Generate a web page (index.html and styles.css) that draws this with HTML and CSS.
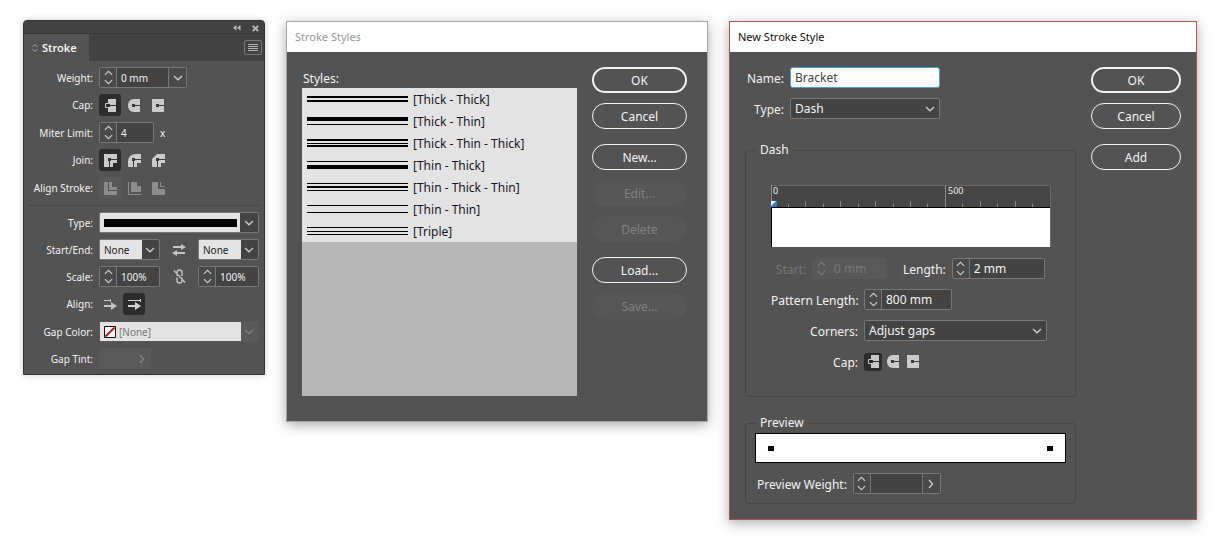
FILE: index.html
```html
<!DOCTYPE html>
<html lang="en">
<head>
<meta charset="utf-8">
<title>Stroke</title>
<link rel="stylesheet" href="styles.css">
</head>
<body>
<svg class="defs" aria-hidden="true">
  <symbol id="up" viewBox="0 0 10 6"><path d="M1 5 5 1.200 9 5" fill="none" stroke="currentColor" stroke-width="1.300"/></symbol>
  <symbol id="down" viewBox="0 0 10 6"><path d="M1 1 5 4.800 9 1" fill="none" stroke="currentColor" stroke-width="1.300"/></symbol>
  <symbol id="right" viewBox="0 0 6 10"><path d="M1 1 4.600 5 1 9" fill="none" stroke="currentColor" stroke-width="1.300"/></symbol>
  <symbol id="cap-butt" viewBox="0 0 12 13"><path d="M4 0h8v13H4z" fill="#cacaca"/><path d="M1.500 4.500h3v4h-3z" fill="#2d2d2d" stroke="#cacaca"/><path d="M4 5h2v1h6v1H6v1H4z" fill="#2d2d2d"/></symbol>
  <symbol id="cap-round" viewBox="0 0 12 13"><path d="M12 0H6C2 0 0 3 0 6.500S2 13 6 13h6z" fill="#cacaca"/><path d="M4 5h3v1h5v1H7v1H4z" fill="#3b3b3b"/></symbol>
  <symbol id="cap-square" viewBox="0 0 12 13"><path d="M0 0h12v13H0z" fill="#cacaca"/><path d="M4 5h3v1h5v1H7v1H4z" fill="#3b3b3b"/></symbol>
  <symbol id="join-miter" viewBox="0 0 13 13"><path d="M0 0h13v9H9v4H0z" fill="#cacaca"/><path d="M4 4h3v1h6v1H7v1H6v6H5V7H4z" fill="#333"/></symbol>
  <symbol id="join-round" viewBox="0 0 13 13"><path d="M13 0H8C3 0 0 3 0 8v5h9V9h4z" fill="#cacaca"/><path d="M4 4h3v1h6v1H7v1H6v6H5V7H4z" fill="#3b3b3b"/></symbol>
  <symbol id="join-bevel" viewBox="0 0 13 13"><path d="M13 0H5L0 5v8h9V9h4z" fill="#cacaca"/><path d="M4 4h3v1h6v1H7v1H6v6H5V7H4z" fill="#3b3b3b"/></symbol>
  <symbol id="align-center" viewBox="0 0 13 13"><path d="M0 0h8v5h5v8H0z" fill="#8c8c8c"/><path d="M4 0h1v8h8v1H4z" fill="#505050"/></symbol>
  <symbol id="align-in" viewBox="0 0 13 13"><path d="M3 0h6v4h4v6H3z" fill="#8c8c8c"/><path d="M0 0h1v12h12v1H0z" fill="#8c8c8c"/></symbol>
  <symbol id="align-out" viewBox="0 0 13 13"><path d="M0 0h6v7h7v6H0z" fill="#8c8c8c"/><path d="M8 0h1v4h4v1H8z" fill="#8c8c8c"/></symbol>
</svg>

<main class="desk">
  <section class="panel" aria-label="Stroke panel">
    <div class="grip">
      <button class="bare" aria-label="Collapse"><svg width="8" height="6" viewBox="0 0 8 6"><path d="M3.500 0v5.500L0 2.800zM7.500 0v5.500L4 2.800z" fill="#b5b5b5"/></svg></button>
      <button class="bare" aria-label="Close"><svg width="7" height="7" viewBox="0 0 7 7"><path d="m.8.8 5.400 5.400m0-5.400L.8 6.200" stroke="#bdbdbd" stroke-width="1.800"/></svg></button>
    </div>
    <div class="tabs">
      <h2 class="tab"><svg width="6" height="10" viewBox="0 0 6 10"><path d="M.6 4 3 1.300 5.400 4M.6 6 3 8.700 5.400 6" fill="none" stroke="#aaa"/></svg>Stroke</h2>
      <button class="menu" aria-label="Panel menu"><svg width="10" height="8" viewBox="0 0 10 8"><path d="M0 .5h10M0 2.500h10M0 4.500h10M0 6.500h10" stroke="#b0b0b0"/></svg></button>
    </div>
    <div class="rows">
      <div class="row">
        <label for="weight">Weight:</label>
        <div class="num w88">
          <span class="step"><button aria-label="More"><svg><use href="#up"/></svg></button><button aria-label="Less"><svg><use href="#down"/></svg></button></span>
          <input id="weight" value="0 mm"><button class="drop" aria-label="Choose weight"><svg class="chev"><use href="#down"/></svg></button>
        </div>
      </div>
      <div class="row">
        <span class="lab">Cap:</span>
        <div class="tools">
          <button class="tool on" aria-label="Butt cap"><svg class="cap"><use href="#cap-butt"/></svg></button>
          <button class="tool" aria-label="Round cap"><svg class="cap"><use href="#cap-round"/></svg></button>
          <button class="tool" aria-label="Projecting cap"><svg class="cap"><use href="#cap-square"/></svg></button>
        </div>
      </div>
      <div class="row">
        <label for="miter">Miter Limit:</label>
        <div class="num w55">
          <span class="step"><button aria-label="More"><svg><use href="#up"/></svg></button><button aria-label="Less"><svg><use href="#down"/></svg></button></span>
          <input id="miter" value="4">
        </div>
        <span>x</span>
      </div>
      <div class="row">
        <span class="lab">Join:</span>
        <div class="tools">
          <button class="tool on" aria-label="Miter join"><svg class="join"><use href="#join-miter"/></svg></button>
          <button class="tool" aria-label="Round join"><svg class="join"><use href="#join-round"/></svg></button>
          <button class="tool" aria-label="Bevel join"><svg class="join"><use href="#join-bevel"/></svg></button>
        </div>
      </div>
      <div class="row">
        <span class="lab">Align Stroke:</span>
        <div class="tools">
          <button class="tool dim" disabled aria-label="Align to center"><svg class="join"><use href="#align-center"/></svg></button>
          <button class="tool" disabled aria-label="Align to inside"><svg class="join"><use href="#align-in"/></svg></button>
          <button class="tool" disabled aria-label="Align to outside"><svg class="join"><use href="#align-out"/></svg></button>
        </div>
      </div>
      <hr class="rule">
      <div class="row">
        <span class="lab">Type:</span>
        <button class="line-type" aria-label="Stroke type: Solid" aria-haspopup="listbox"><span class="solid"></span><span class="arrow"><svg class="chev"><use href="#down"/></svg></span></button>
      </div>
      <div class="row">
        <label for="start">Start/End:</label>
        <div class="pair">
          <div class="pick light w60"><select id="start"><option>None</option></select><svg class="chev"><use href="#down"/></svg></div>
          <button class="bare" aria-label="Swap start and end"><svg width="14" height="12" viewBox="0 0 14 12"><path d="M1 2h8V0l5 3-5 3V4H1zM13 8H5V6L0 9l5 3v-2h8z" fill="#c4c4c4"/></svg></button>
          <div class="pick light w60"><select id="end" aria-label="End"><option>None</option></select><svg class="chev"><use href="#down"/></svg></div>
        </div>
      </div>
      <div class="row">
        <label for="scale1">Scale:</label>
        <div class="pair">
          <div class="num w60">
            <span class="step"><button aria-label="More"><svg><use href="#up"/></svg></button><button aria-label="Less"><svg><use href="#down"/></svg></button></span>
            <input id="scale1" value="100%">
          </div>
          <button class="bare" aria-label="Link scales"><svg width="13" height="15" viewBox="0 0 13 15" fill="none" stroke="#bdbdbd" stroke-width="1.500"><path d="M4 7V3.500a2.500 2.500 0 0 1 5 0V7M4 8.500v3a2.500 2.500 0 0 0 5 0v-3M1 1.500l11 12"/></svg></button>
          <div class="num w60">
            <span class="step"><button aria-label="More"><svg><use href="#up"/></svg></button><button aria-label="Less"><svg><use href="#down"/></svg></button></span>
            <input aria-label="End scale" value="100%">
          </div>
        </div>
      </div>
      <div class="row">
        <span class="lab">Align:</span>
        <div class="tools">
          <button class="tool" aria-label="Extend arrow beyond path"><svg width="13" height="11" viewBox="0 0 13 11"><path d="M0 1.500h7" stroke="#c4c4c4"/><path d="M6 0h1v3H6zM0 6h7V3l6 4-6 4V8H0z" fill="#c4c4c4"/></svg></button>
          <button class="tool on" aria-label="Place arrow at path end"><svg width="13" height="11" viewBox="0 0 13 11"><path d="M0 1.500h12" stroke="#d4d4d4"/><path d="M12 0h1v3h-1zM0 6h7V3l6 4-6 4V8H0z" fill="#d4d4d4"/></svg></button>
        </div>
      </div>
      <div class="row">
        <label for="gap">Gap Color:</label>
        <div class="pick light color">
          <svg class="swatch" viewBox="0 0 12 12"><path d="M.5.5h11v11H.5z" fill="#fff" stroke="#111"/><path d="M1.500 10.500l9-9" stroke="#b3121d" stroke-width="1.800"/></svg>
          <select id="gap" disabled><option>[None]</option></select><svg class="chev"><use href="#down"/></svg>
        </div>
      </div>
      <div class="row">
        <label for="tint">Gap Tint:</label>
        <div class="tint"><input id="tint" disabled><svg class="more"><use href="#right"/></svg></div>
      </div>
    </div>
  </section>

  <section class="dialog" aria-label="Stroke Styles">
    <h2 class="title">Stroke Styles</h2>
    <div class="body">
      <div class="styles">
        <span id="styles-label" class="caption">Styles:</span>
        <ul class="list" role="listbox" aria-labelledby="styles-label">
          <li role="option"><svg class="sample"><path d="M0 8h101v2H0zM0 12h101v2H0z"/></svg><span>[Thick - Thick]</span></li>
          <li role="option"><svg class="sample"><path d="M0 7h101v4H0zM0 14h101v1H0z"/></svg><span>[Thick - Thin]</span></li>
          <li role="option"><svg class="sample"><path d="M0 7h101v2H0zM0 11h101v1H0zM0 13h101v2H0z"/></svg><span>[Thick - Thin - Thick]</span></li>
          <li role="option"><svg class="sample"><path d="M0 7h101v1H0zM0 11h101v4H0z"/></svg><span>[Thin - Thick]</span></li>
          <li role="option"><svg class="sample"><path d="M0 7h101v1H0zM0 10h101v2H0zM0 14h101v1H0z"/></svg><span>[Thin - Thick - Thin]</span></li>
          <li role="option"><svg class="sample"><path d="M0 7h101v1H0zM0 14h101v1H0z"/></svg><span>[Thin - Thin]</span></li>
          <li role="option"><svg class="sample"><path d="M0 7h101v1H0zM0 11h101v1H0zM0 14h101v1H0z"/></svg><span>[Triple]</span></li>
        </ul>
      </div>
      <div class="actions wide">
        <div class="group"><button class="pill main">OK</button><button class="pill">Cancel</button></div>
        <div class="group"><button class="pill">New...</button><button class="pill" disabled>Edit...</button><button class="pill" disabled>Delete</button></div>
        <div class="group"><button class="pill">Load...</button><button class="pill" disabled>Save...</button></div>
      </div>
    </div>
  </section>

  <section class="dialog active" aria-label="New Stroke Style">
    <h2 class="title">New Stroke Style</h2>
    <div class="body">
      <form class="form">
        <div class="line head"><label for="name">Name:</label><input id="name" class="text" value="Bracket"></div>
        <div class="line head"><label for="type">Type:</label><div class="pick w150"><select id="type"><option>Dash</option></select><svg class="chev"><use href="#down"/></svg></div></div>
        <fieldset class="box dash">
          <legend>Dash</legend>
          <div class="inner">
            <svg class="ruler" viewBox="0 0 280 63">
              <path d="M0 0h280v22H0z" fill="#464646"/>
              <path d="M0 .5h279.500V62" fill="none" stroke="#666"/>
              <path d="M.5 0v22M174.500 0v22" stroke="#8a8a8a"/>
              <path d="M17.500 19v3M34.500 16v6M52.500 19v3M69.500 16v6M87.500 19v3M104.500 16v6M122.500 19v3M139.500 16v6M156.500 19v3M191.500 19v3M209.500 16v6M226.500 19v3M244.500 16v6M261.500 19v3" stroke="#8a8a8a"/>
              <path d="M0 22h279v40H0z" fill="#000"/><path d="M1 23h278v39H1z" fill="#fff"/>
              <path d="M0 16h6v5l-2 1H0z" fill="#2f80c8"/><path d="M0 16h5L0 21z" fill="#fff"/>
              <text x="2" y="9">0</text><text x="177" y="9">500</text>
            </svg>
            <div class="line">
              <label class="off" for="from">Start:</label>
              <div class="num off w75"><span class="step"><button type="button" disabled aria-label="More"><svg><use href="#up"/></svg></button><button type="button" disabled aria-label="Less"><svg><use href="#down"/></svg></button></span><input id="from" disabled value="0 mm"></div>
              <label class="after" for="length">Length:</label>
              <div class="num w93"><span class="step"><button type="button" aria-label="More"><svg><use href="#up"/></svg></button><button type="button" aria-label="Less"><svg><use href="#down"/></svg></button></span><input id="length" value="2 mm"></div>
            </div>
            <div class="line"><label for="pattern">Pattern Length:</label>
              <div class="num w88"><span class="step"><button type="button" aria-label="More"><svg><use href="#up"/></svg></button><button type="button" aria-label="Less"><svg><use href="#down"/></svg></button></span><input id="pattern" value="800 mm"></div>
            </div>
            <div class="line"><label for="corners">Corners:</label><div class="pick w183"><select id="corners"><option>Adjust gaps</option></select><svg class="chev"><use href="#down"/></svg></div></div>
            <div class="line"><span class="lab">Cap:</span>
              <div class="tools small">
                <button type="button" class="tool on" aria-label="Butt cap"><svg class="cap"><use href="#cap-butt"/></svg></button>
                <button type="button" class="tool" aria-label="Round cap"><svg class="cap"><use href="#cap-round"/></svg></button>
                <button type="button" class="tool" aria-label="Projecting cap"><svg class="cap"><use href="#cap-square"/></svg></button>
              </div>
            </div>
          </div>
        </fieldset>
        <fieldset class="box preview">
          <legend>Preview</legend>
          <div class="view"><i></i><i></i></div>
          <div class="line"><label for="pw">Preview Weight:</label>
            <div class="num w88"><span class="step"><button type="button" aria-label="More"><svg><use href="#up"/></svg></button><button type="button" aria-label="Less"><svg><use href="#down"/></svg></button></span><input id="pw"><button type="button" class="drop" aria-label="Choose preview weight"><svg class="more"><use href="#right"/></svg></button></div>
          </div>
        </fieldset>
      </form>
      <div class="actions">
        <div class="group"><button class="pill main">OK</button><button class="pill">Cancel</button></div>
        <div class="group"><button class="pill">Add</button></div>
      </div>
    </div>
  </section>
</main>
</body>
</html>
```

FILE: styles.css
```css
* { box-sizing: border-box; }
body { margin: 0; background: #fff; color: #f2f2f2; font: 12px/16px "Noto Sans", sans-serif; }
h2, ul, fieldset, legend { margin: 0; padding: 0; font-size: inherit; font-weight: 400; }
button, input, select { font: inherit; color: inherit; margin: 0; padding: 0; border: 0; border-radius: 0; background: none; outline: 0; }
button { display: flex; align-items: center; justify-content: center; }
select { appearance: none; width: 100%; height: 100%; opacity: 1; }
svg { display: block; flex: none; }
.defs { position: absolute; width: 0; height: 0; }

.desk { display: grid; grid-template-columns: 242fr 422fr 468fr; gap: 21px; align-items: start; padding: 21px 25px 24px 23px; }

/* Stroke panel */
.panel { background: #535353; border: 1px solid #333; border-radius: 4px 4px 0 0; font-size: 10px; box-shadow: 0 0 6px #0003; margin-top: -1px; overflow: hidden; }
.grip { height: 13px; background: #424242; border-bottom: 1px solid #383838; display: flex; justify-content: flex-end; align-items: center; gap: 11px; padding: 2px 5px 0; }
.tabs { height: 27px; background: #424242; display: flex; justify-content: space-between; align-items: center; padding-right: 2px; }
.tab { height: 27px; background: #535353; display: flex; align-items: center; gap: 4px; padding: 0 12px 0 8px; font-size: 11px; font-weight: 600; }
.menu { width: 18px; height: 15px; border: 1px solid #777; border-radius: 2px; }
.rows { display: flex; flex-direction: column; gap: 6px; padding: 6px 5px 5px 0; }
.row { display: flex; align-items: center; gap: 6px; }
.row > label, .row > .lab { width: 69px; text-align: right; white-space: nowrap; flex: none; }
.rule { margin: 0 0 0 4px; height: 1px; border: 0; background: #474747; }
.pair { flex: 1; display: flex; justify-content: space-between; align-items: center; }

/* Shared fields */
.num { display: flex; height: 21px; border: 1px solid #777; border-radius: 2px; background: #434343; }
.num input { flex: 1; min-width: 0; width: 0; padding: 0 4px; }
.step { width: 17px; flex: none; background: #4a4a4a; border-right: 1px solid #777; display: flex; flex-direction: column; justify-content: center; align-items: center; gap: 3px; }
.step svg { width: 9px; height: 6px; color: #ccc; }
.drop { width: 18px; flex: none; border-left: 1px solid #777; background: #4a4a4a; }
.chev { width: 10px; height: 6px; color: #ccc; }
.more { width: 6px; height: 10px; color: #ccc; }
.pick { position: relative; height: 21px; border: 1px solid #777; border-radius: 2px; background: #434343; }
.pick select { padding: 0 20px 0 4px; }
.pick .chev { position: absolute; right: 4px; top: 7px; }
.light select { width: calc(100% - 17px); padding: 0 4px; background: #e3e3e3; color: #222; display: block; }
.w55 { width: 55px; } .w60 { width: 61px; } .w75 { width: 75px; } .w88 { width: 88px; } .w93 { width: 93px; } .w150 { width: 150px; } .w183 { width: 183px; }

.tools { display: flex; gap: 2px; }
.tool { width: 22px; height: 22px; border-radius: 3px; }
.on { background: #2d2d2d; }
.dim { background: #595959; }
.cap { width: 12px; height: 13px; }
.join { width: 13px; height: 13px; }
.line-type { flex: 1; height: 21px; border: 1px solid #777; border-radius: 2px; background: #e3e3e3; justify-content: stretch; }
.solid { flex: 1; height: 8px; background: #000; margin: 0 3px 0 4px; }
.arrow { width: 18px; height: 19px; background: #434343; display: grid; place-items: center; }
.pick.color { flex: 1; background: #595959; border-color: #595959; }
.color select { padding-left: 19px; color: #777; }
.color .chev { color: #858585; }
.swatch { position: absolute; left: 4px; top: 4px; width: 12px; height: 12px; }
.tint { width: 52px; height: 21px; background: #595959; display: flex; align-items: center; padding-right: 6px; }
.tint input { flex: 1; min-width: 0; width: 0; }
.tint .more { color: #858585; }

/* Dialogs */
.dialog { background: #535353; border: 1px solid #a5a5a5; box-shadow: 0 3px 12px #0005; }
.active { border-color: #b25353; }
.title { height: 30px; padding: 7px 8px; background: #fff; color: #999; font-size: 11px; }
.active .title { color: #111; }
.body { display: flex; justify-content: space-between; padding: 15px 20px 25px 15px; }
.active .body { padding: 15px; }
.styles { width: 275px; padding-top: 4px; }
.caption { display: block; padding: 0 1px 1px; }
.list { list-style: none; height: 308px; background: #b8b8b8; color: #15151f; }
.list li { height: 22px; display: flex; align-items: center; gap: 5px; background: #e3e3e3; padding-left: 5px; }
.list span { padding-top: 2px; }
.sample { width: 101px; height: 22px; }
.actions { width: 90px; display: flex; flex-direction: column; gap: 15px; }
.wide { width: 95px; }
.group { display: flex; flex-direction: column; gap: 10px; }
.pill { height: 26px; padding-top: 2px; border: 1px solid #f2f2f2; border-radius: 13px; }
.main { border-width: 2px; }
.pill:disabled { background: #575757; border-color: #575757; color: #808080; }

.form { width: 331px; }
.line { display: flex; align-items: center; gap: 6px; min-height: 21px; }
.line label, .line .lab { padding-top: 2px; }
.head { margin-bottom: 10px; }
.head label { width: 39px; text-align: right; }
.text { width: 150px; height: 21px; padding: 0 4px; border: 1px solid #4f9fd0; border-radius: 3px; background: #fff; color: #444; }
.box { border: 1px solid #464646; border-radius: 3px; min-width: 0; padding: 2px 9px 9px; }
.box legend { margin-left: 1px; padding: 0 4px; height: 16px; }
.dash { margin-top: 23px; }
.inner { padding: 25px 16px 6px; }
.dash .line { margin-bottom: 10px; }
.dash .line:last-child { margin-bottom: 9px; }
.dash .line > label:first-child, .dash .line > .lab { width: 87px; text-align: right; white-space: nowrap; }
.dash .line > .off:first-child { width: 35px; }
.dash .line > .after { margin-left: 10px; }
.ruler { width: 280px; height: 63px; margin-bottom: 10px; overflow: visible; }
.ruler text { font-size: 9px; fill: #eee; }
.off { color: #777; }
.num.off, .off .step { background: #595959; border-color: #595959; }
.off svg { color: #7c7c7c; }
.small .tool { width: 18px; height: 18px; }
.preview { margin-top: 18px; }
.preview .line { padding-left: 2px; }
.view { height: 30px; background: #fff; border: 1px solid #000; display: flex; justify-content: space-between; align-items: center; padding: 0 12px; margin-bottom: 10px; }
.view i { width: 6px; height: 5px; background: #000; }
```
